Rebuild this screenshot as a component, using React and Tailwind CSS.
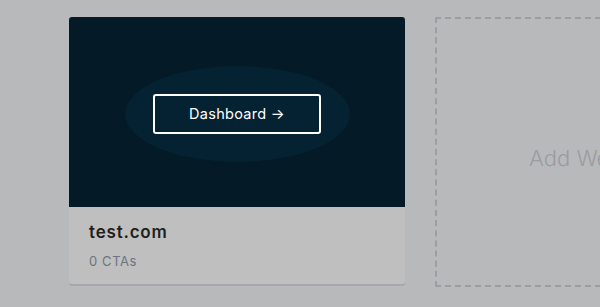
export default function App() {
  return (
    <div
      className="w-[600px] h-[307px] overflow-hidden bg-[#b8b9bb] flex items-start gap-[30px] pl-[69px] pt-[17px]"
      style={{ fontFamily: "Inter, 'Noto Sans', sans-serif" }}
    >
      <div className="w-[336px] shrink-0 flex flex-col rounded-[3px] overflow-hidden shadow-[0_2px_0_#a6a7ab]">
        <div className="h-[190px] bg-[#041a26] flex items-center justify-center pt-[4px]">
          <div className="w-[225px] h-[96px] rounded-[50%] bg-[#052233] flex items-center justify-center">
            <div className="w-[168px] h-[40px] border-2 border-white rounded-[3px] flex items-center justify-center text-white text-[14.5px] tracking-[0.3px]">
              Dashboard →
            </div>
          </div>
        </div>
        <div className="h-[77px] bg-[#bfbfbf] flex flex-col pl-[20px] pt-[13px]">
          <div className="text-[17px] font-semibold text-[#1f1f21] leading-[24px] tracking-[0.8px]">test.com</div>
          <div className="text-[13px] text-[#6b7480] leading-[16px] mt-[9px] tracking-[0.6px]">0 CTAs</div>
        </div>
      </div>
      <div className="w-[336px] h-[270px] shrink-0 border-2 border-dashed border-[#9d9ea2] rounded-[2px] flex items-center pl-[92px] pt-[12px]">
        <span className="text-[22px] font-light text-[#9a9ca1] whitespace-nowrap">Add Website</span>
      </div>
    </div>
  );
}
